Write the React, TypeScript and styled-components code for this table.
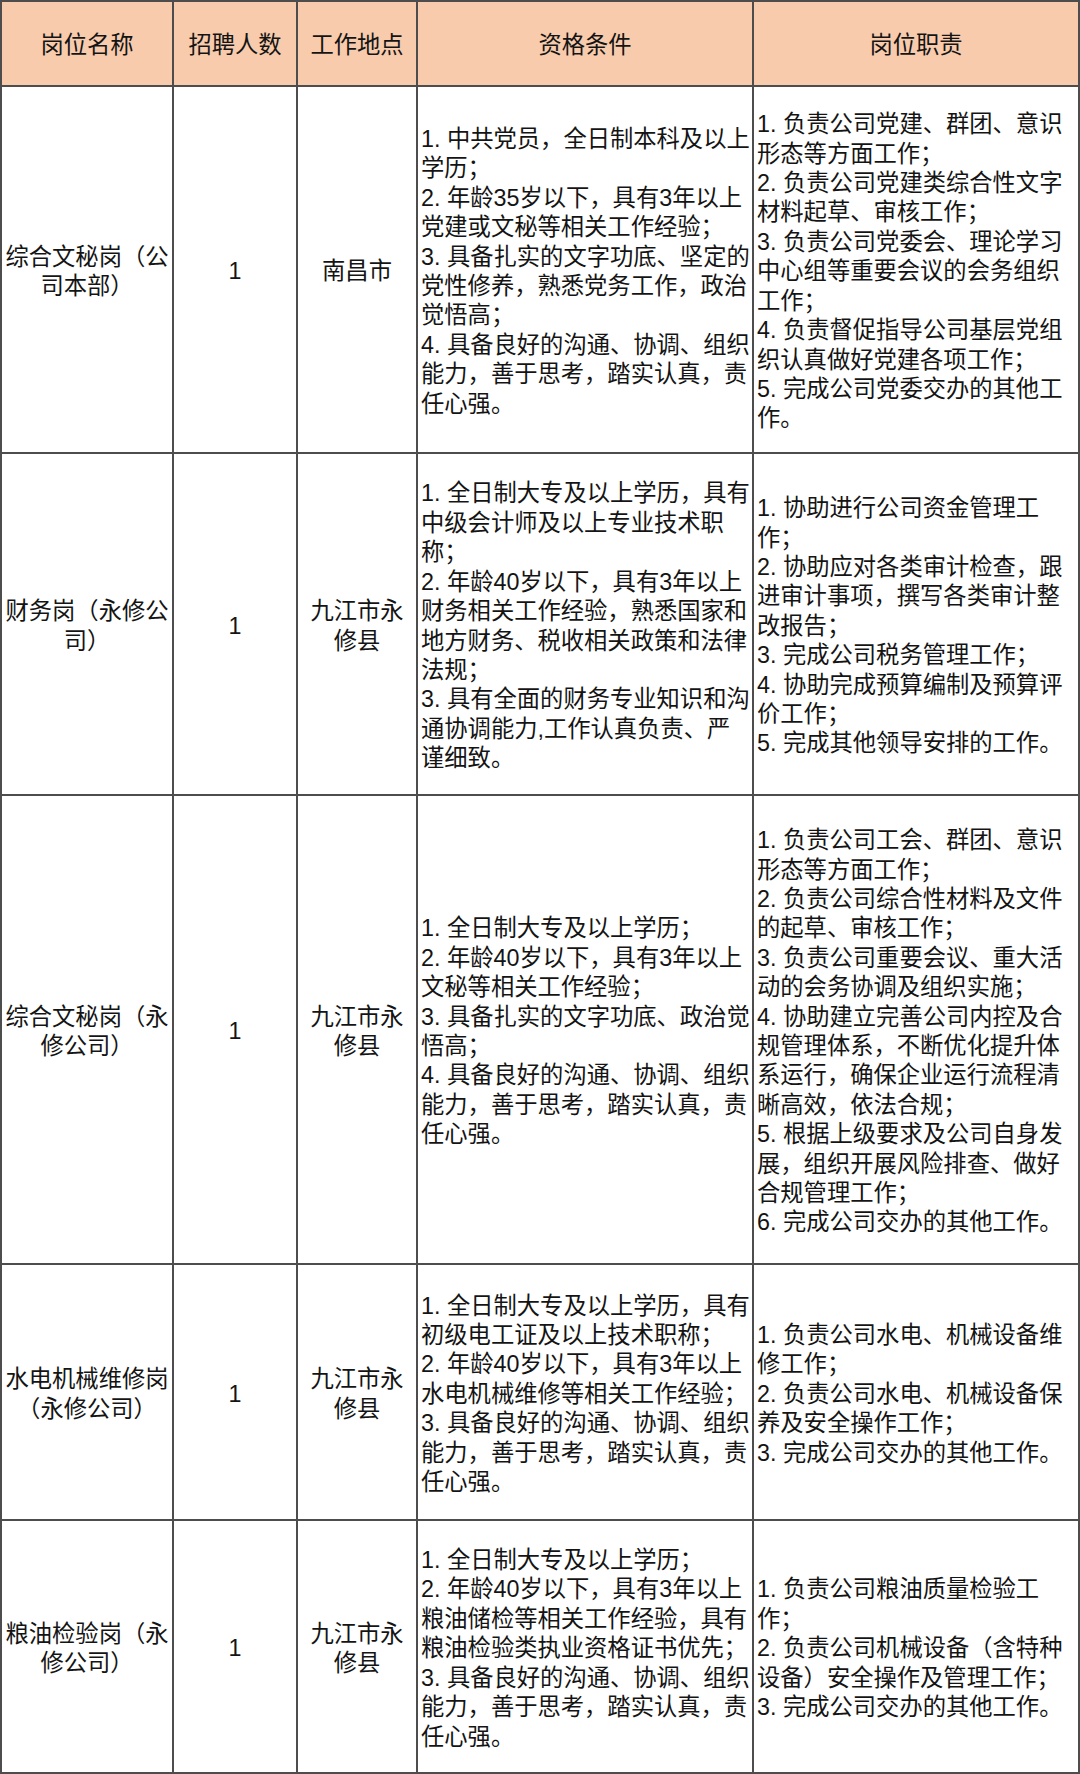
import React from "react";
import styled, { createGlobalStyle } from "styled-components";

const GlobalStyle = createGlobalStyle`
  html, body {
    margin: 0;
    padding: 0;
    background: #ffffff;
  }
  body {
    font-family: "Liberation Sans", "Noto Sans CJK SC", sans-serif;
    color: #141414;
  }
`;

const Table = styled.div`
  display: grid;
  width: 1080px;
  height: 1774px;
  box-sizing: border-box;
  padding: 2px;
  gap: 2px;
  background: #4d4d4d;
  grid-template-columns: 170px 122px 118px 334px 324px;
  grid-template-rows: 83px 365px 340px 467px 254px 251px;
`;

const Cell = styled.div<{ $head?: boolean; $align?: "center" | "left" }>`
  background: ${(p) => (p.$head ? "#f8cbad" : "#ffffff")};
  display: flex;
  flex-direction: column;
  justify-content: center;
  align-items: ${(p) => (p.$align === "left" ? "flex-start" : "center")};
  text-align: ${(p) => (p.$align === "left" ? "left" : "center")};
  padding: 5px 0 0 ${(p) => (p.$align === "left" ? "3px" : "0")};
  font-size: 23.3px;
  line-height: 29.4px;
  overflow: hidden;
`;

const Line = styled.div`
  white-space: nowrap;
`;

type Row = {
  name: string[];
  count: string;
  place: string[];
  req: string[];
  duty: string[];
};

const headers = ["岗位名称", "招聘人数", "工作地点", "资格条件", "岗位职责"];

const rows: Row[] = [
  {
    name: ["综合文秘岗（公", "司本部）"],
    count: "1",
    place: ["南昌市"],
    req: [
      "1. 中共党员，全日制本科及以上",
      "学历；",
      "2. 年龄35岁以下，具有3年以上",
      "党建或文秘等相关工作经验；",
      "3. 具备扎实的文字功底、坚定的",
      "党性修养，熟悉党务工作，政治",
      "觉悟高；",
      "4. 具备良好的沟通、协调、组织",
      "能力，善于思考，踏实认真，责",
      "任心强。",
    ],
    duty: [
      "1. 负责公司党建、群团、意识",
      "形态等方面工作；",
      "2. 负责公司党建类综合性文字",
      "材料起草、审核工作；",
      "3. 负责公司党委会、理论学习",
      "中心组等重要会议的会务组织",
      "工作；",
      "4. 负责督促指导公司基层党组",
      "织认真做好党建各项工作；",
      "5. 完成公司党委交办的其他工",
      "作。",
    ],
  },
  {
    name: ["财务岗（永修公", "司）"],
    count: "1",
    place: ["九江市永", "修县"],
    req: [
      "1. 全日制大专及以上学历，具有",
      "中级会计师及以上专业技术职",
      "称；",
      "2. 年龄40岁以下，具有3年以上",
      "财务相关工作经验，熟悉国家和",
      "地方财务、税收相关政策和法律",
      "法规；",
      "3. 具有全面的财务专业知识和沟",
      "通协调能力,工作认真负责、严",
      "谨细致。",
    ],
    duty: [
      "1. 协助进行公司资金管理工",
      "作；",
      "2. 协助应对各类审计检查，跟",
      "进审计事项，撰写各类审计整",
      "改报告；",
      "3. 完成公司税务管理工作；",
      "4. 协助完成预算编制及预算评",
      "价工作；",
      "5. 完成其他领导安排的工作。",
    ],
  },
  {
    name: ["综合文秘岗（永", "修公司）"],
    count: "1",
    place: ["九江市永", "修县"],
    req: [
      "1. 全日制大专及以上学历；",
      "2. 年龄40岁以下，具有3年以上",
      "文秘等相关工作经验；",
      "3. 具备扎实的文字功底、政治觉",
      "悟高；",
      "4. 具备良好的沟通、协调、组织",
      "能力，善于思考，踏实认真，责",
      "任心强。",
    ],
    duty: [
      "1. 负责公司工会、群团、意识",
      "形态等方面工作；",
      "2. 负责公司综合性材料及文件",
      "的起草、审核工作；",
      "3. 负责公司重要会议、重大活",
      "动的会务协调及组织实施；",
      "4. 协助建立完善公司内控及合",
      "规管理体系，不断优化提升体",
      "系运行，确保企业运行流程清",
      "晰高效，依法合规；",
      "5. 根据上级要求及公司自身发",
      "展，组织开展风险排查、做好",
      "合规管理工作；",
      "6. 完成公司交办的其他工作。",
    ],
  },
  {
    name: ["水电机械维修岗", "（永修公司）"],
    count: "1",
    place: ["九江市永", "修县"],
    req: [
      "1. 全日制大专及以上学历，具有",
      "初级电工证及以上技术职称；",
      "2. 年龄40岁以下，具有3年以上",
      "水电机械维修等相关工作经验；",
      "3. 具备良好的沟通、协调、组织",
      "能力，善于思考，踏实认真，责",
      "任心强。",
    ],
    duty: [
      "1. 负责公司水电、机械设备维",
      "修工作；",
      "2. 负责公司水电、机械设备保",
      "养及安全操作工作；",
      "3. 完成公司交办的其他工作。",
    ],
  },
  {
    name: ["粮油检验岗（永", "修公司）"],
    count: "1",
    place: ["九江市永", "修县"],
    req: [
      "1. 全日制大专及以上学历；",
      "2. 年龄40岁以下，具有3年以上",
      "粮油储检等相关工作经验，具有",
      "粮油检验类执业资格证书优先；",
      "3. 具备良好的沟通、协调、组织",
      "能力，善于思考，踏实认真，责",
      "任心强。",
    ],
    duty: [
      "1. 负责公司粮油质量检验工",
      "作；",
      "2. 负责公司机械设备（含特种",
      "设备）安全操作及管理工作；",
      "3. 完成公司交办的其他工作。",
    ],
  },
];

const Lines: React.FC<{ items: string[] }> = ({ items }) => (
  <>
    {items.map((t, i) => (
      <Line key={i}>{t}</Line>
    ))}
  </>
);

export default function App() {
  return (
    <>
      <GlobalStyle />
      <Table>
        {headers.map((h) => (
          <Cell key={h} $head>
            <Line>{h}</Line>
          </Cell>
        ))}
        {rows.map((r, i) => (
          <React.Fragment key={i}>
            <Cell>
              <Lines items={r.name} />
            </Cell>
            <Cell>
              <Line>{r.count}</Line>
            </Cell>
            <Cell>
              <Lines items={r.place} />
            </Cell>
            <Cell $align="left">
              <Lines items={r.req} />
            </Cell>
            <Cell $align="left">
              <Lines items={r.duty} />
            </Cell>
          </React.Fragment>
        ))}
      </Table>
    </>
  );
}
